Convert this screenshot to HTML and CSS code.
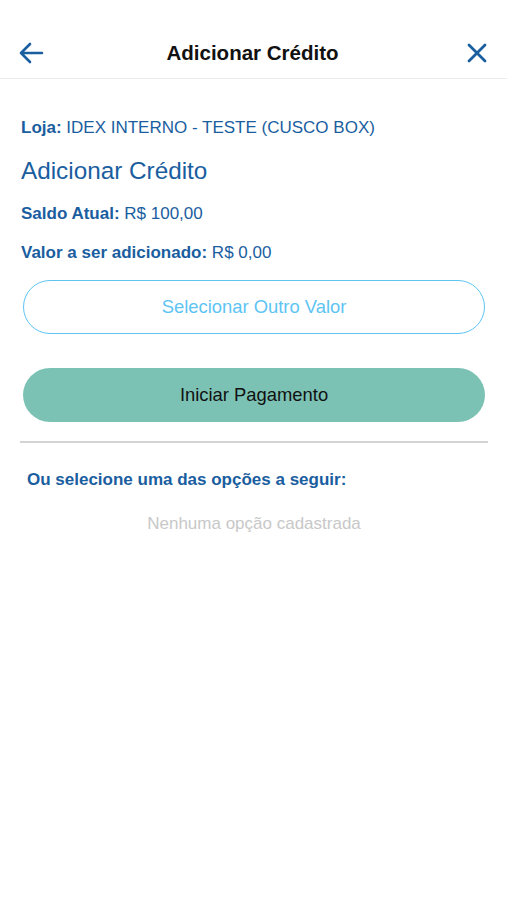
FILE: index.html
```html
<!DOCTYPE html>
<html lang="pt-BR">
<head>
    <meta charset="UTF-8">
    <meta name="viewport" content="width=device-width, initial-scale=1.0">
    <title>Adicionar Crédito</title>
    <link rel="stylesheet" href="styles.css">
</head>
<body>
    <!-- Top navigation bar -->
    <header class="nav-bar">
        <button class="nav-btn" aria-label="Voltar">
            <svg width="26" height="22" viewBox="0 0 26 22">
                <path d="M24 11H3M12 2L3 11l9 9" fill="none" stroke="#1a5ea0" stroke-width="2.6" stroke-linecap="round" stroke-linejoin="round"/>
            </svg>
        </button>
        <div class="nav-title">Adicionar Crédito</div>
        <button class="nav-btn close" aria-label="Fechar">
            <svg width="20" height="20" viewBox="0 0 20 20">
                <path d="M2 2l16 16M18 2L2 18" fill="none" stroke="#1a5ea0" stroke-width="2.8" stroke-linecap="round"/>
            </svg>
        </button>
    </header>

    <main class="content">
        <p class="info"><b>Loja:</b> IDEX INTERNO - TESTE (CUSCO BOX)</p>
        <h1 class="section-title">Adicionar Crédito</h1>
        <p class="info"><b>Saldo Atual:</b> R$ 100,00</p>
        <p class="info last"><b>Valor a ser adicionado:</b> R$ 0,00</p>

        <button class="btn btn-outline">Selecionar Outro Valor</button>
        <button class="btn btn-fill">Iniciar Pagamento</button>

        <hr class="divider">

        <p class="options-title">Ou selecione uma das opções a seguir:</p>
        <p class="empty">Nenhuma opção cadastrada</p>
    </main>
</body>
</html>
```

FILE: styles.css
```css
/* Base page */
body {
    margin: 0;
    font-family: "Liberation Sans", Arial, sans-serif;
    background: #ffffff;
    color: #1a5ea0;
}

/* Navigation bar */
.nav-bar {
    height: 79px;
    box-sizing: border-box;
    padding: 28px 20px 0 18px;
    display: flex;
    align-items: center;
    justify-content: space-between;
    border-bottom: 1px solid #ececec;
}

.nav-btn {
    background: none;
    border: none;
    padding: 0;
    width: 28px;
    height: 24px;
    display: flex;
    align-items: center;
    justify-content: flex-start;
    cursor: pointer;
}

.nav-btn.close {
    justify-content: flex-end;
}

.nav-title {
    font-size: 20.5px;
    font-weight: bold;
    color: #111111;
}

/* Main content */
.content {
    padding: 39px 20px 0 21px;
    display: flex;
    flex-direction: column;
}

.info {
    margin: 0 0 19px;
    font-size: 17px;
    line-height: 20px;
}

.info.last {
    margin-bottom: 17px;
}

.section-title {
    margin: 0 0 19px;
    font-size: 24.3px;
    font-weight: normal;
    line-height: 28px;
}

/* Buttons */
.btn {
    font-family: inherit;
    font-size: 18.4px;
    height: 54px;
    margin: 0 2px;
    border-radius: 27px;
    cursor: pointer;
}

.btn-outline {
    background: #ffffff;
    border: 1.5px solid #5ec4f2;
    color: #5ec4f2;
}

.btn-fill {
    margin-top: 34px;
    background: #7cc2b4;
    border: none;
    color: #111111;
}

.divider {
    margin: 19px -1px 0;
    border: none;
    height: 2px;
    background: #d4d4d4;
}

.options-title {
    margin: 27px 0 0 6px;
    font-size: 17px;
    line-height: 20px;
    font-weight: bold;
}

.empty {
    margin: 24px 0 0;
    text-align: center;
    font-size: 17px;
    line-height: 20px;
    color: #c8c8c8;
}
```
